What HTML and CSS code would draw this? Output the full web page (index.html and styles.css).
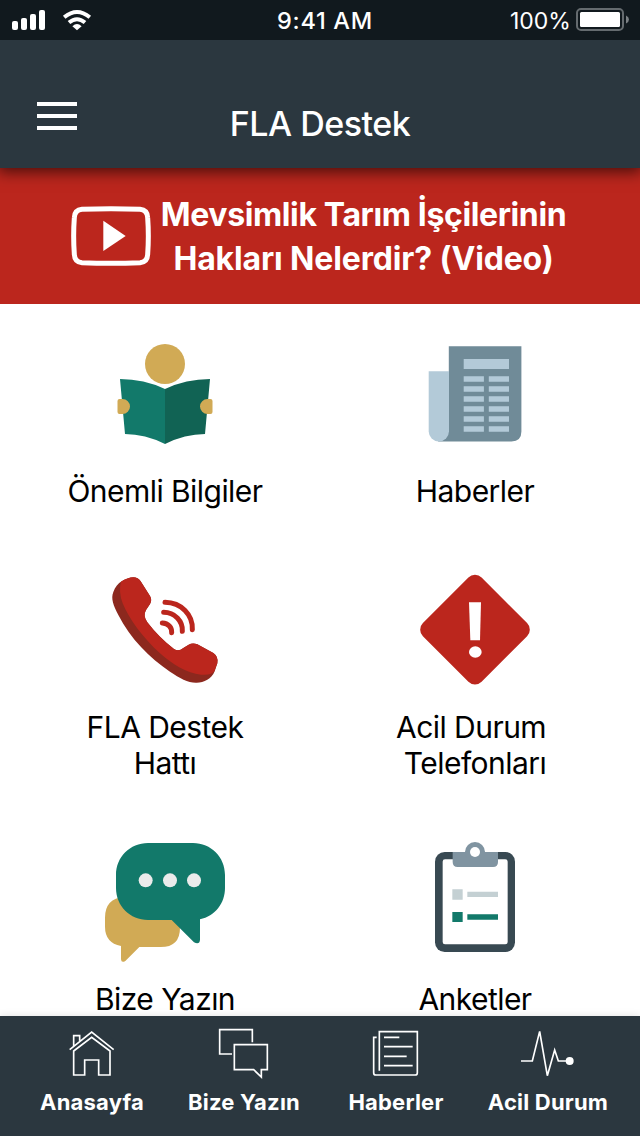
FILE: index.html
```html
<!DOCTYPE html>
<html lang="tr">
<head>
<meta charset="utf-8">
<title>FLA Destek</title>
<link rel="stylesheet" href="styles.css">
</head>
<body>
<div class="app">
  <div class="status">
    <svg class="status-left" viewBox="0 0 100 40" fill="#fff">
      <rect x="12" y="21" width="6" height="9" rx="2"/><rect x="21" y="18" width="6" height="12" rx="2"/><rect x="30" y="14" width="6" height="16" rx="2"/><rect x="39" y="10" width="6" height="20" rx="2"/>
      <g fill="none" stroke="#fff" stroke-width="4"><path d="M64.200 17.200Q77 6.800 89.800 17.200"/><path d="M69 22.600Q77 15.800 85 22.600"/></g>
      <path d="M72.400 26.200Q77 22 81.600 26.200L77 30.200Z"/>
    </svg>
    <span class="clock">9:41 AM</span>
    <div class="status-right">
      <span class="percent">100%</span>
      <svg class="battery" viewBox="575 8 56 26"><rect x="577" y="10" width="46" height="21" rx="4" fill="none" stroke="#656b6f" stroke-width="2"/><rect x="580" y="13" width="40" height="15" rx="1.5" fill="#fff"/><path d="M626 16.500Q629 18 629 20.500T626 24.500Z" fill="#7c8185"/></svg>
    </div>
  </div>
  <header class="header">
    <div class="menu"><i></i><i></i><i></i></div>
    <h1 class="title">FLA Destek</h1>
  </header>
  <section class="banner">
    <svg class="play" viewBox="63 138 240 180"><path d="M96 148Q183 144 270 148Q292 150 293 173Q297 228 293 283Q292 306 270 308Q183 312 96 308Q74 306 73 283Q69 228 73 173Q74 150 96 148Z" fill="none" stroke="#fff" stroke-width="15"/><path d="M160 182L227 228L160 273Z" fill="#fff"/></svg>
    <div class="banner-text"><span class="banner-lead">Mevsimlik Tarım İşçilerinin</span><span class="banner-sub">Hakları Nelerdir? (Video)</span></div>
  </section>
  <main class="grid">
    <div class="tile">
      <svg class="icon" viewBox="105 334 120 120">
        <circle cx="165" cy="364" r="20" fill="#d1aa55"/>
        <path d="M120 379Q144 379 165 389V444Q145 434 125 434Z" fill="#12796a"/><path d="M210 379Q186 379 165 389V444Q185 434 205 434Z" fill="#116354"/>
        <path d="M119.500 399H122.500A7.500 7.500 0 0 1 122.500 414H119.500Q117.500 414 117.500 412V401Q117.500 399 119.500 399ZM210.500 399H207.500A7.500 7.500 0 0 0 207.500 414H210.500Q212.500 414 212.500 412V401Q212.500 399 210.500 399Z" fill="#d1aa55"/>
      </svg>
      <p class="label">Önemli Bilgiler</p>
    </div>
    <div class="tile">
      <svg class="icon" viewBox="415 334 120 120">
        <path d="M448.800 346.300H521.400V431.500Q521.400 441.400 511.500 441.400H438L448.800 425Z" fill="#708b98"/>
        <path d="M428.700 371.300H449V431.300A10.150 10.150 0 0 1 428.700 431.300Z" fill="#b3cad8"/>
        <g fill="#b3cad8"><path d="M463.700 359H509V369H463.700Z"/><path d="M463.700 376.300h20.200v5.400h-20.200zm25.100 0h20.200v5.400h-20.200z"/><path d="M463.700 386.300h20.200v5.400h-20.200zm25.100 0h20.200v5.400h-20.200z"/><path d="M463.700 396.300h20.200v5.400h-20.200zm25.100 0h20.200v5.400h-20.200z"/><path d="M463.700 406.300h20.200v5.400h-20.200zm25.100 0h20.200v5.400h-20.200z"/><path d="M463.700 416.300h20.200v5.400h-20.200zm25.100 0h20.200v5.400h-20.200z"/><path d="M463.700 426.300h20.200v5.400h-20.200zm25.100 0h20.200v5.400h-20.200z"/></g>
      </svg>
      <p class="label">Haberler</p>
    </div>
    <div class="tile">
      <svg class="icon" viewBox="105 30 360 360">
        <path d="M155 64C165 57 180 52 190 52Q204 52 212 64L240 108Q247 120 240 132L228 150Q218 167 232 187C255 217 280 243 312 267Q326 276 340 264L356 254Q368 247 382 253L430 279Q446 290 442 310L434 334C425 357 402 368 380 368C355 369 330 355 300 335C240 295 180 235 145 165C130 137 122 115 130 96C135 81 145 70 155 64Z" fill="#8c281e"/>
        <path d="M153 65C165 57 180 52 190 52Q204 52 212 64L240 108Q247 120 240 132L228 150Q218 167 232 187C255 217 280 243 312 267Q326 276 340 264L356 254Q368 247 382 253L430 279Q446 290 442 310L433 334Q422 347 393 344C350 339 310 315 270 280C220 235 178 178 158 130Q145 95 153 65Z" fill="#bb261d"/>
        <g fill="none" stroke="#bb261d" stroke-width="15" stroke-linecap="round"><path d="M285 127C334 128 369 164 367 209"/><path d="M281 157C314 157 339 184 337 214"/><path d="M277 189C295 190 306 202 305 218"/></g>
      </svg>
      <p class="label">FLA Destek<br>Hattı</p>
    </div>
    <div class="tile">
      <svg class="icon" viewBox="105 30 360 360">
        <rect x="160.500" y="84.500" width="249" height="249" rx="28" transform="rotate(45 285 209)" fill="#bb261d"/>
        <path d="M267 127H303L300 241H271Z" fill="#fff"/><ellipse cx="286" cy="276" rx="19" ry="17.500" fill="#fff"/>
      </svg>
      <p class="label">Acil Durum&nbsp;<br>Telefonları</p>
    </div>
    <div class="tile">
      <svg class="icon" viewBox="75 36 360 360">
        <path d="M133 200H242Q300 208 300 263V293Q300 351 242 351H178L136 393Q124 400 123 388V348Q75 338 75 290V263Q75 205 133 200Z" fill="#d1aa55"/>
        <path d="M204 39H339C393 39 435 81 435 135V174C435 220 405 258 360 268V329Q359 345 342 337L275 270H204C150 270 108 228 108 174V135C108 81 150 39 204 39Z" fill="#12796a"/>
        <g fill="#ebebeb"><circle cx="197" cy="151" r="21"/><circle cx="270" cy="151" r="21"/><circle cx="342" cy="151" r="21"/></g>
      </svg>
      <p class="label">Bize Yazın</p>
    </div>
    <div class="tile">
      <svg class="icon" viewBox="45 36 360 360">
        <rect x="105" y="66" width="240" height="300" rx="29" fill="#384952"/><rect x="128" y="88" width="195" height="255" rx="7" fill="#fff"/>
        <path d="M158 66H196A30 30 0 0 1 254 66H294V96Q294 111 279 111H173Q158 111 158 96Z" fill="#8094a1"/><circle cx="225" cy="66" r="30" fill="#8094a1"/><circle cx="225" cy="66" r="15" fill="#fff"/>
        <path d="M157 178h31v31h-31zM202 185h92v16h-92z" fill="#c4d0d3"/><path d="M157 246h31v30h-31zM202 253h92v16h-92z" fill="#12796a"/>
      </svg>
      <p class="label">Anketler</p>
    </div>
  </main>
  <nav class="nav">
    <div class="tab"><svg class="tab-icon" viewBox="132 48 168 168"><path d="M149 119L215 66L281 119M161 123V195H194V150H236V195H270V123L215 82ZM161 108V77H179V92"/></svg><span>Anasayfa</span></div>
    <div class="tab"><svg class="tab-icon" viewBox="588 48 168 168"><path d="M636 132H599V59H697V97M643 104H742V179H724V201L701 179H643Z"/></svg><span>Bize Yazın</span></div>
    <div class="tab"><svg class="tab-icon" viewBox="144 48 168 168"><path d="M178 182V65H292V188Q292 195 285 195H168Q161 195 161 188V82H170M192 82H238M192 110H278M192 139H260M192 167H278"/></svg><span>Haberler</span></div>
    <div class="tab"><svg class="tab-icon" viewBox="600 48 168 168"><path d="M603 153H637L659 64L682 197L704 120L715 153H745"/><circle cx="749" cy="153" r="12" fill="#fff" stroke="none"/></svg><span>Acil Durum</span></div>
  </nav>
</div>
</body>
</html>
```
FILE: styles.css
```css
* { box-sizing: border-box; margin: 0; padding: 0; }
body { font-family: Inter, "Liberation Sans", sans-serif; background: #fff; color: #000; }
svg { display: block; flex: none; }
span { white-space: nowrap; }
.app { width: 640px; height: 1136px; display: flex; flex-direction: column; overflow: hidden; }

.status { height: 40px; flex: none; background: #11191e; color: #fff; display: grid; grid-template-columns: 100px 1fr 130px; align-items: center; z-index: 2; }
.status-left { width: 100px; height: 40px; }
.clock { font-size: 23.500px; font-weight: 500; letter-spacing: 0.7px; line-height: 38px; justify-self: center; padding: 2px 0 0 40px; }
.status-right { display: flex; align-items: center; gap: 5px; }
.percent { width: 60px; font-size: 23px; line-height: 38px; padding-top: 2px; }
.battery { width: 56px; height: 26px; }

.header { height: 128px; flex: none; background: #2b373f; color: #fff; display: grid; grid-template-columns: 77px 1fr 77px; padding-top: 62px; box-shadow: 0 2px 14px 2px rgba(0, 0, 0, 0.62); z-index: 1; }
.menu { padding-left: 37px; display: flex; flex-direction: column; gap: 8px; }
.menu i { display: block; height: 4px; flex: none; background: #fff; }
.title { font-size: 34px; font-weight: 500; letter-spacing: -0.5px; line-height: 40px; text-align: center; padding-top: 2px; }

.banner { height: 136px; flex: none; background: #bb261d; color: #fff; display: flex; align-items: flex-start; gap: 10px; padding: 25px 0 0 71px; }
.play { width: 80px; height: 60px; margin-top: 13px; }
.banner-text { width: 405px; display: flex; flex-direction: column; align-items: center; font-size: 32px; font-weight: 700; line-height: 44px; }
.banner-lead { letter-spacing: -0.38px; }
.banner-sub { letter-spacing: -0.14px; }

.grid { flex: 1; min-height: 0; overflow: hidden; padding: 30px 10px 0; display: grid; grid-template-columns: 310px 310px; row-gap: 61px; align-content: start; }
.tile { display: flex; flex-direction: column; align-items: center; gap: 19px; }
.icon { width: 120px; height: 120px; }
.label { font-size: 30px; letter-spacing: -0.55px; line-height: 36px; text-align: center; }

.nav { height: 120px; flex: none; background: #2b373f; color: #fff; display: grid; grid-template-columns: repeat(4, 152px); padding: 10px 16px 0; box-shadow: 0 0 8px rgba(0, 0, 0, 0.12); z-index: 1; }
.tab { display: flex; flex-direction: column; align-items: center; gap: 5px; font-size: 22px; font-weight: 700; line-height: 30px; letter-spacing: 0.2px; }
.tab-icon { width: 56px; height: 56px; fill: none; stroke: #fff; stroke-width: 5; }
```
